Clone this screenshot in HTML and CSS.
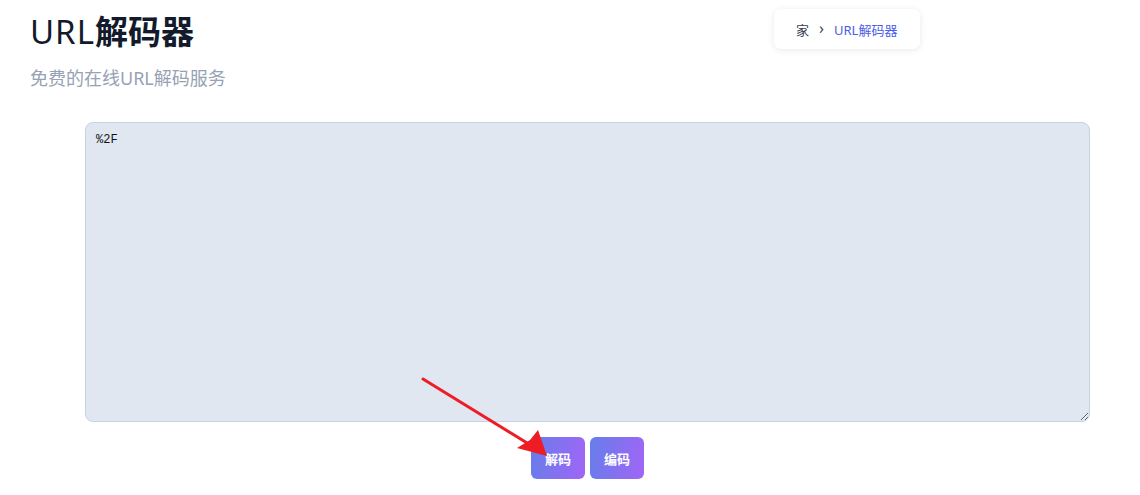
FILE: index.html
```html
<!DOCTYPE html>
<html lang="zh">
<head>
    <meta charset="UTF-8">
    <meta name="viewport" content="width=device-width, initial-scale=1.0">
    <title>URL解码器</title>
    <link rel="stylesheet" href="styles.css">
</head>
<body>
    <div class="page-head">
        <div class="title-block">
            <h1>URL<span class="cjk">解码器</span></h1>
            <p class="subtitle">免费的在线URL解码服务</p>
        </div>
        <nav class="breadcrumb">
            <a href="#">家</a>
            <span class="sep">›</span>
            <span class="current">URL解码器</span>
        </nav>
    </div>

    <div class="tool">
        <textarea class="input" spellcheck="false">%2F</textarea>
        <div class="actions">
            <button class="btn">解码</button>
            <button class="btn">编码</button>
        </div>
        <svg class="arrow" width="140" height="90" viewBox="0 0 140 90">
            <line x1="3" y1="3" x2="112" y2="70" stroke="#ee1c25" stroke-width="3" stroke-linecap="round"/>
            <polygon points="127,80 97,72 110,64 118,54" fill="#ee1c25"/>
        </svg>
    </div>
</body>
</html>
```

FILE: styles.css
```css
body {
    margin: 0;
    background: #fff;
    font-family: "Noto Sans", "Noto Sans CJK SC", sans-serif;
    color: #1a2233;
}

.page-head {
    display: grid;
    grid-template-columns: 744px auto;
    align-items: start;
    padding: 9px 0 0 30px;
}
.page-head h1 {
    margin: 0;
    font-size: 33px;
    font-weight: 400;
    line-height: 46px;
    letter-spacing: 1px;
    color: #121a2c;
}
.page-head h1 .cjk {
    font-weight: 700;
    letter-spacing: 0;
}
.subtitle {
    margin: 11px 0 0;
    font-size: 18px;
    line-height: 25px;
    color: #97a1b4;
}

.breadcrumb {
    display: flex;
    align-items: center;
    gap: 10px;
    width: 146px;
    height: 40px;
    box-sizing: border-box;
    padding: 0 22px;
    background: #fff;
    border-radius: 7px;
    box-shadow: 0 1px 6px rgba(30, 40, 80, 0.1);
    font-size: 13px;
}
.breadcrumb a {
    color: #3a4152;
    text-decoration: none;
}
.breadcrumb .sep {
    color: #3a4152;
    font-size: 16px;
    line-height: 1;
    margin-top: -2px;
}
.breadcrumb .current {
    color: #4a5de8;
}

.tool {
    position: relative;
    padding: 31px 50px 0 85px;
}
.input {
    display: block;
    width: 100%;
    height: 300px;
    box-sizing: border-box;
    padding: 10px;
    background: #e0e7f1;
    border: 1px solid #c7d2e4;
    border-radius: 8px;
    font-family: "Liberation Mono", monospace;
    font-size: 12px;
    color: #111;
    resize: vertical;
    outline: none;
}
.actions {
    display: flex;
    justify-content: center;
    gap: 5px;
    margin-top: 15px;
}
.btn {
    width: 54px;
    height: 42px;
    border: none;
    border-radius: 6px;
    background: linear-gradient(100deg, #667eea, #a165f6);
    color: #fff;
    font-family: "Noto Sans CJK SC", sans-serif;
    font-size: 13px;
    font-weight: 700;
    cursor: pointer;
}

.arrow {
    position: absolute;
    left: 420px;
    top: 285px;
}
```
